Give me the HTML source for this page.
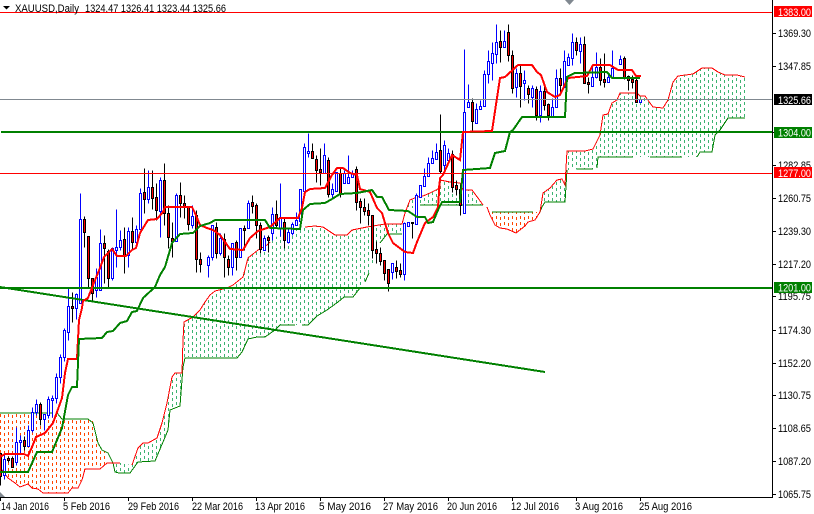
<!DOCTYPE html>
<html><head><meta charset="utf-8"><style>
html,body{margin:0;padding:0;background:#fff;overflow:hidden}
svg{display:block}
text{font-family:"Liberation Sans",sans-serif;font-size:11px;fill:#000}
</style></head><body>
<svg width="814" height="514" viewBox="0 0 814 514" xmlns="http://www.w3.org/2000/svg">
<defs>
<pattern id="g" width="8" height="6" patternUnits="userSpaceOnUse"><rect x="0" y="0" width="1" height="3" fill="#3cb371"/><rect x="4" y="2" width="1" height="3" fill="#3cb371"/></pattern>
<pattern id="o" width="8" height="6" patternUnits="userSpaceOnUse"><rect x="0" y="0" width="1" height="3" fill="#ff4500"/><rect x="4" y="1" width="1" height="3" fill="#ff4500"/></pattern>
</defs>
<rect width="814" height="514" fill="#fff"/>
<!-- clouds -->
<path fill="url(#o)" shape-rendering="crispEdges" d="M0 413H57L62 419H93L98 443L102 450L108 453L107 463L100 468H85L82 480L72 488L68 493H43L38 489H32L28 484L20 487L15 483L8 478L0 467Z"/>
<path fill="url(#g)" shape-rendering="crispEdges" d="M113 463H120L132 465L138 448L143 443H148L157 438L162 423L167 403L172 377L175 373H182L183 340L184 322L193 317L200 310L205 302L210 295L215 291L227 288L233 285L243 277L248 258L258 250L267 245L270 242L280 234L305 227L315 226L323 227L335 235H347L352 230L367 227L385 224H402L405 213L402 234H387L380 243L369 273L365 282L360 288L353 295L344 297L338 302L327 310L317 316L308 324L302 325H280L275 330L265 337H257L248 339L242 352L237 357H185L183 367L180 406L170 410L168 430L163 442L155 461L138 462L130 473H119L115 472Z"/>
<path fill="url(#g)" shape-rendering="crispEdges" d="M405 213L410 200L417 197L423 196L430 193L438 189L440 180L450 182L460 183L463 190H472L478 198L483 205H420L408 210Z"/>
<path fill="url(#o)" shape-rendering="crispEdges" d="M490 212H540L535 220L528 222L525 226L516 233L507 229L500 228L495 225L490 215Z"/>
<path fill="url(#g)" shape-rendering="crispEdges" d="M542 207L543 193L550 188L557 180L562 179L565 185L567 151H585L593 149L600 135L603 115L608 114L612 103L617 100L620 93H637L640 96H645L650 103L653 107L663 108L668 100L673 82L678 76L693 74L702 68H712L718 72L725 75H737L745 77V118H728L720 130L715 135L712 152H700L697 157H598L597 168L567 170L565 202H545Z"/>
<g fill="none" shape-rendering="crispEdges">
<path stroke="#008000" d="M0 413H52M57 413L62 419H88L93 423L98 443L102 450L108 453L113 463L115 472L119 473H130L138 462L155 461L163 442L168 430L170 410L180 406L183 367L185 358H237L242 352L248 339L257 337H265L275 330L280 325H295M302 325H308L317 316L327 310L338 302L344 297H353L360 288M365 282L369 273M380 243L387 234H402M420 205H483M492 212H533M540 212L542 207L545 202H565L567 170M577 169H593M597 168L598 157H633M650 157H682M697 157L700 152H712L715 135L720 130L728 118H745"/>
<path stroke="#f00" d="M0 467L8 478L15 483L20 487L28 484L32 488L38 489L43 493H68L72 488H78L82 480L85 469H100L107 463H120M132 465L138 448L143 443H148L157 438L162 423L167 403L172 377L175 373H182L183 340L184 322L193 317L200 310L205 302L210 295L215 291L227 288L233 285L243 277L248 258L258 250L267 245L270 242M305 227L315 226L323 227L335 235H347L352 230L367 227L385 224H402L405 213L410 200L417 197L423 196L430 193L438 189L440 180L450 182L460 183L463 190H472L478 198L483 205M487 207L490 215L495 225L500 228L507 229L516 233L525 226L528 222L535 220L540 212L543 193L550 188L557 180L562 179L565 185L567 151H585L593 149L600 135L603 115L608 114L612 103L617 100L620 93H637L640 96H645L650 103L653 107L663 108L668 100L673 82L678 76L693 74L702 68H712L718 72L725 75H737L745 77"/>
</g>
<!-- candles -->
<g transform="translate(.5 .5)" shape-rendering="crispEdges">
<path fill="none" stroke="#0000ff" d="M4 455V479M16 427V465M20 435V453M28 425V446M32 407V432M36 399V415M44 414V430M48 396V418M52 395V417M56 373V403M60 354V383M64 328V361M68 288V340M76 293V319M80 193V298M96 268V297M100 229V290M112 247V280M116 209V267M120 230V250M128 227V267M136 225V248M140 188V229M148 170V203M160 177V237M176 193V241M192 205V228M208 255V277M212 225V260M220 233V255M232 243V275M240 228V257M248 200V228M264 235V250M272 207V240M280 183V236M288 227V243M292 222V235M296 212V225M300 189V221M304 143V191M308 133V157M324 143V173M332 183V199M336 172V191M344 170V183M348 155V183M352 170V177M392 263V279M404 222V280M408 222V226M416 193V224M420 185V197M424 168V186M428 157V176M432 150V163M436 143V159M444 140V170M448 148V160M464 49V213M468 84V107M476 103V123M480 100V109M484 70V106M488 50V83M492 42V80M496 24V63M504 30V47M516 68V97M524 70V100M532 85V107M540 85V122M552 98V116M556 69V107M564 50V87M568 53V65M572 33V65M580 37V63M592 65V86M596 52V78M608 73V82M612 50V77M620 55V64"/>
<path fill="#fff" stroke="#0000ff" d="M3 459h2V475h-2zM15 442h2V462h-2zM19 440h2V442h-2zM27 430h2V446h-2zM31 412h2V430h-2zM35 404h2V412h-2zM43 414h2V419h-2zM47 399h2V415h-2zM51 398h2V400h-2zM55 377h2V398h-2zM59 357h2V377h-2zM63 330h2V357h-2zM67 306h2V332h-2zM75 294h2V308h-2zM79 219h2V303h-2zM95 277h2V290h-2zM99 243h2V290h-2zM111 248h2V278h-2zM115 247h2V250h-2zM119 240h2V247h-2zM127 231h2V255h-2zM135 229h2V242h-2zM139 193h2V229h-2zM147 187h2V199h-2zM159 180h2V211h-2zM175 195h2V241h-2zM191 216h2V225h-2zM207 257h2V265h-2zM211 225h2V257h-2zM219 238h2V253h-2zM231 243h2V267h-2zM239 228h2V257h-2zM247 203h2V228h-2zM263 238h2V250h-2zM271 214h2V233h-2zM279 217h2V228h-2zM287 232h2V242h-2zM291 224h2V233h-2zM295 220h2V225h-2zM299 189h2V221h-2zM303 147h2V191h-2zM307 151h2V153h-2zM323 155h2V173h-2zM331 189h2V194h-2zM335 172h2V191h-2zM343 173h2V183h-2zM347 177h2V183h-2zM351 173h2V177h-2zM391 263h2V272h-2zM403 223h2V274h-2zM407 222h2V226h-2zM415 195h2V224h-2zM419 185h2V197h-2zM423 176h2V186h-2zM427 163h2V176h-2zM431 158h2V163h-2zM435 152h2V159h-2zM443 145h2V165h-2zM447 153h2V160h-2zM463 112h2V213h-2zM467 102h2V107h-2zM475 109h2V123h-2zM479 106h2V109h-2zM483 74h2V106h-2zM487 61h2V74h-2zM491 53h2V63h-2zM495 42h2V54h-2zM503 41h2V47h-2zM515 73h2V87h-2zM523 80h2V83h-2zM531 88h2V97h-2zM539 91h2V115h-2zM551 107h2V116h-2zM555 78h2V107h-2zM563 61h2V87h-2zM567 57h2V65h-2zM571 42h2V58h-2zM579 44h2V51h-2zM591 77h2V86h-2zM595 67h2V77h-2zM607 77h2V82h-2zM611 68h2V77h-2zM619 59h2V64h-2zM639 99h2V102h-2z"/>
<path fill="none" stroke="#000" d="M0 453V485M8 456V462M12 456V467M24 436V450M40 402V425M72 292V322M84 216V247M88 236V287M92 278V300M104 235V283M108 249V287M124 227V273M132 217V250M144 168V213M152 170V209M156 183V220M164 163V225M168 205V248M172 222V257M180 182V217M184 195V218M188 206V230M196 210V272M200 252V272M216 222V258M224 233V277M228 255V275M236 240V270M244 225V250M252 195V213M256 203V238M260 222V253M268 235V252M276 200V228M284 218V248M312 143V158M316 155V182M320 148V185M328 157V197M340 168V197M356 166V210M360 198V223M364 198V215M368 203V225M372 215V258M376 241V263M380 247V265M384 260V280M388 269V291M396 260V278M400 263V277M412 222V238M440 114V173M452 150V192M456 180V195M460 184V215M472 98V130M500 30V62M508 24V61M512 50V93M520 65V107M528 85V103M536 86V120M544 82V110M548 103V120M560 68V95M576 37V55M584 36V83M588 77V93M600 58V85M604 53V87M624 56V79M628 75V90M632 75V88M636 77V102"/>
<path fill="#f00" stroke="#000" d="M-1 453h2V476h-2zM7 458h2V460h-2zM11 458h2V467h-2zM23 440h2V446h-2zM39 404h2V419h-2zM71 306h2V308h-2zM83 219h2V232h-2zM87 236h2V278h-2zM91 278h2V293h-2zM103 243h2V248h-2zM107 251h2V278h-2zM123 239h2V255h-2zM131 231h2V242h-2zM143 192h2V199h-2zM151 187h2V198h-2zM155 197h2V210h-2zM163 180h2V213h-2zM167 213h2V237h-2zM171 238h2V241h-2zM179 195h2V203h-2zM183 203h2V206h-2zM187 206h2V224h-2zM195 215h2V259h-2zM199 259h2V264h-2zM215 227h2V253h-2zM223 239h2V257h-2zM227 259h2V267h-2zM235 242h2V257h-2zM243 228h2V230h-2zM251 202h2V206h-2zM255 205h2V225h-2zM259 225h2V249h-2zM267 237h2V240h-2zM275 214h2V225h-2zM283 222h2V240h-2zM311 151h2V158h-2zM315 159h2V170h-2zM319 169h2V172h-2zM327 160h2V194h-2zM339 173h2V194h-2zM355 169h2V202h-2zM359 201h2V207h-2zM363 207h2V211h-2zM367 210h2V215h-2zM371 215h2V250h-2zM375 249h2V253h-2zM379 253h2V261h-2zM383 260h2V273h-2zM387 269h2V283h-2zM395 267h2V271h-2zM399 270h2V274h-2zM411 222h2V223h-2zM439 150h2V171h-2zM451 154h2V187h-2zM455 185h2V189h-2zM459 189h2V205h-2zM471 102h2V121h-2zM499 41h2V47h-2zM507 32h2V55h-2zM511 55h2V88h-2zM519 73h2V86h-2zM527 88h2V94h-2zM535 89h2V115h-2zM543 91h2V105h-2zM547 104h2V115h-2zM559 78h2V85h-2zM575 42h2V50h-2zM583 44h2V83h-2zM587 82h2V84h-2zM599 67h2V80h-2zM603 79h2V82h-2zM623 58h2V77h-2zM627 76h2V80h-2zM631 79h2V82h-2zM635 80h2V102h-2z"/>
</g>
<!-- horizontal lines -->
<rect x="0" y="12" width="772" height="1" fill="#f00"/>
<rect x="0" y="99" width="772" height="1" fill="#808890"/>
<rect x="0" y="173" width="772" height="1" fill="#f00"/>
<rect x="1" y="131" width="771" height="2" fill="#008000"/>
<rect x="0" y="287" width="772" height="2" fill="#008000"/>
<line x1="0" y1="287" x2="545" y2="372" stroke="#008000" stroke-width="2" shape-rendering="crispEdges"/>
<!-- indicator lines -->
<polyline fill="none" stroke="#f00" stroke-width="2" shape-rendering="crispEdges" points="0,457 5,454 24,454 28,456 32,447 36,437 45,433 53,423 57,412 62,398 65,373 68,359 77,359 79,320 82,308 83,301 88,298 93,285 100,268 104,257 112,249 117,256 126,256 132,250 136,248 140,233 148,220 157,219 163,212 165,207 192,207 195,213 200,225 207,228 213,230 220,235 230,249 243,250 250,238 258,231 270,227 280,218 298,218 302,208 305,192 310,189 325,188 332,175 337,168 343,168 350,173 357,175 360,189 370,192 377,208 382,213 388,233 393,243 405,252 413,253 417,242 425,223 433,217 438,207 440,178 443,175 452,155 460,160 463,132 492,131 500,78 505,77 518,65 532,65 537,72 541,75 547,92 555,97 560,95 568,78 587,76 593,65 610,65 618,70 632,70 636,76 641,76"/>
<polyline fill="none" stroke="#008000" stroke-width="2" shape-rendering="crispEdges" points="0,472 28,472 37,452 52,452 62,428 68,395 72,387 77,387 79,339 102,338 107,332 113,331 120,323 127,321 132,312 137,311 143,298 155,287 160,275 165,267 172,243 180,234 193,233 200,226 210,223 215,220 265,220 270,228 300,229 303,210 310,204 325,203 332,199 340,194 357,193 372,190 377,197 382,197 389,210 408,211 417,217 425,217 428,223 433,222 438,210 442,202 460,202 463,170 490,168 495,153 505,151 510,132 513,130 522,117 565,117 567,77 575,73 607,72 612,78 640,78"/>
<!-- axes -->
<rect x="772" y="0" width="1" height="498" fill="#000"/>
<rect x="0" y="497" width="773" height="1" fill="#000"/>
<path d="M772 33.5h4M772 66.5h4M772 132.5h4M772 165.5h4M772 198.5h4M772 231.5h4M772 264.5h4M772 296.5h4M772 330.5h4M772 363.5h4M772 395.5h4M772 428.5h4M772 461.5h4M772 494.5h4M0.5 497v4M64.5 497v4M128.5 497v4M192.5 497v4M256.5 497v4M320.5 497v4M384.5 497v4M448.5 497v4M512.5 497v4M576.5 497v4M640.5 497v4" stroke="#000" stroke-width="1" shape-rendering="crispEdges"/>
<path d="M3 6h7l-3.5 3.5z" fill="#000"/>
<path d="M565 0h9l-4.5 5z" fill="#808890"/>
<path d="M0 497v-5l5 5z" fill="#808890"/>
<text x="15" y="12" textLength="64" lengthAdjust="spacingAndGlyphs">XAUUSD,Daily</text>
<text x="85" y="12" textLength="141" lengthAdjust="spacingAndGlyphs">1324.47 1326.41 1323.44 1325.66</text>
<g>
<text x="778" y="37" textLength="33" lengthAdjust="spacingAndGlyphs">1369.30</text>
<text x="778" y="70" textLength="33" lengthAdjust="spacingAndGlyphs">1347.85</text>
<text x="778" y="169" textLength="33" lengthAdjust="spacingAndGlyphs">1282.85</text>
<text x="778" y="202" textLength="33" lengthAdjust="spacingAndGlyphs">1260.75</text>
<text x="778" y="235" textLength="33" lengthAdjust="spacingAndGlyphs">1239.30</text>
<text x="778" y="268" textLength="33" lengthAdjust="spacingAndGlyphs">1217.20</text>
<text x="778" y="300" textLength="33" lengthAdjust="spacingAndGlyphs">1195.75</text>
<text x="778" y="334" textLength="33" lengthAdjust="spacingAndGlyphs">1174.30</text>
<text x="778" y="367" textLength="33" lengthAdjust="spacingAndGlyphs">1152.20</text>
<text x="778" y="399" textLength="33" lengthAdjust="spacingAndGlyphs">1130.75</text>
<text x="778" y="432" textLength="33" lengthAdjust="spacingAndGlyphs">1108.65</text>
<text x="778" y="465" textLength="33" lengthAdjust="spacingAndGlyphs">1087.20</text>
<text x="778" y="498" textLength="33" lengthAdjust="spacingAndGlyphs">1065.75</text>
</g>
<rect x="774" y="6" width="38" height="11" fill="#f00"/><text x="778" y="16" textLength="33" lengthAdjust="spacingAndGlyphs" style="fill:#fff">1383.00</text>
<rect x="774" y="94" width="38" height="11" fill="#000"/><text x="778" y="104" textLength="33" lengthAdjust="spacingAndGlyphs" style="fill:#fff">1325.66</text>
<rect x="774" y="127" width="38" height="11" fill="#008000"/><text x="778" y="136.5" textLength="33" lengthAdjust="spacingAndGlyphs" style="fill:#fff">1304.00</text>
<rect x="774" y="167" width="38" height="11" fill="#f00"/><text x="778" y="177" textLength="33" lengthAdjust="spacingAndGlyphs" style="fill:#fff">1277.00</text>
<rect x="774" y="282" width="38" height="11" fill="#008000"/><text x="778" y="291.5" textLength="33" lengthAdjust="spacingAndGlyphs" style="fill:#fff">1201.00</text>
<g>
<text x="1" y="510" textLength="48" lengthAdjust="spacingAndGlyphs">14 Jan 2016</text>
<text x="63" y="510" textLength="47" lengthAdjust="spacingAndGlyphs">5 Feb 2016</text>
<text x="128" y="510" textLength="51" lengthAdjust="spacingAndGlyphs">29 Feb 2016</text>
<text x="192" y="510" textLength="51" lengthAdjust="spacingAndGlyphs">22 Mar 2016</text>
<text x="255" y="510" textLength="50" lengthAdjust="spacingAndGlyphs">13 Apr 2016</text>
<text x="319" y="510" textLength="52" lengthAdjust="spacingAndGlyphs">5 May 2016</text>
<text x="383" y="510" textLength="55" lengthAdjust="spacingAndGlyphs">27 May 2016</text>
<text x="447" y="510" textLength="50" lengthAdjust="spacingAndGlyphs">20 Jun 2016</text>
<text x="511" y="510" textLength="48" lengthAdjust="spacingAndGlyphs">12 Jul 2016</text>
<text x="575" y="510" textLength="48" lengthAdjust="spacingAndGlyphs">3 Aug 2016</text>
<text x="639" y="510" textLength="53" lengthAdjust="spacingAndGlyphs">25 Aug 2016</text>
</g>
</svg>
</body></html>
